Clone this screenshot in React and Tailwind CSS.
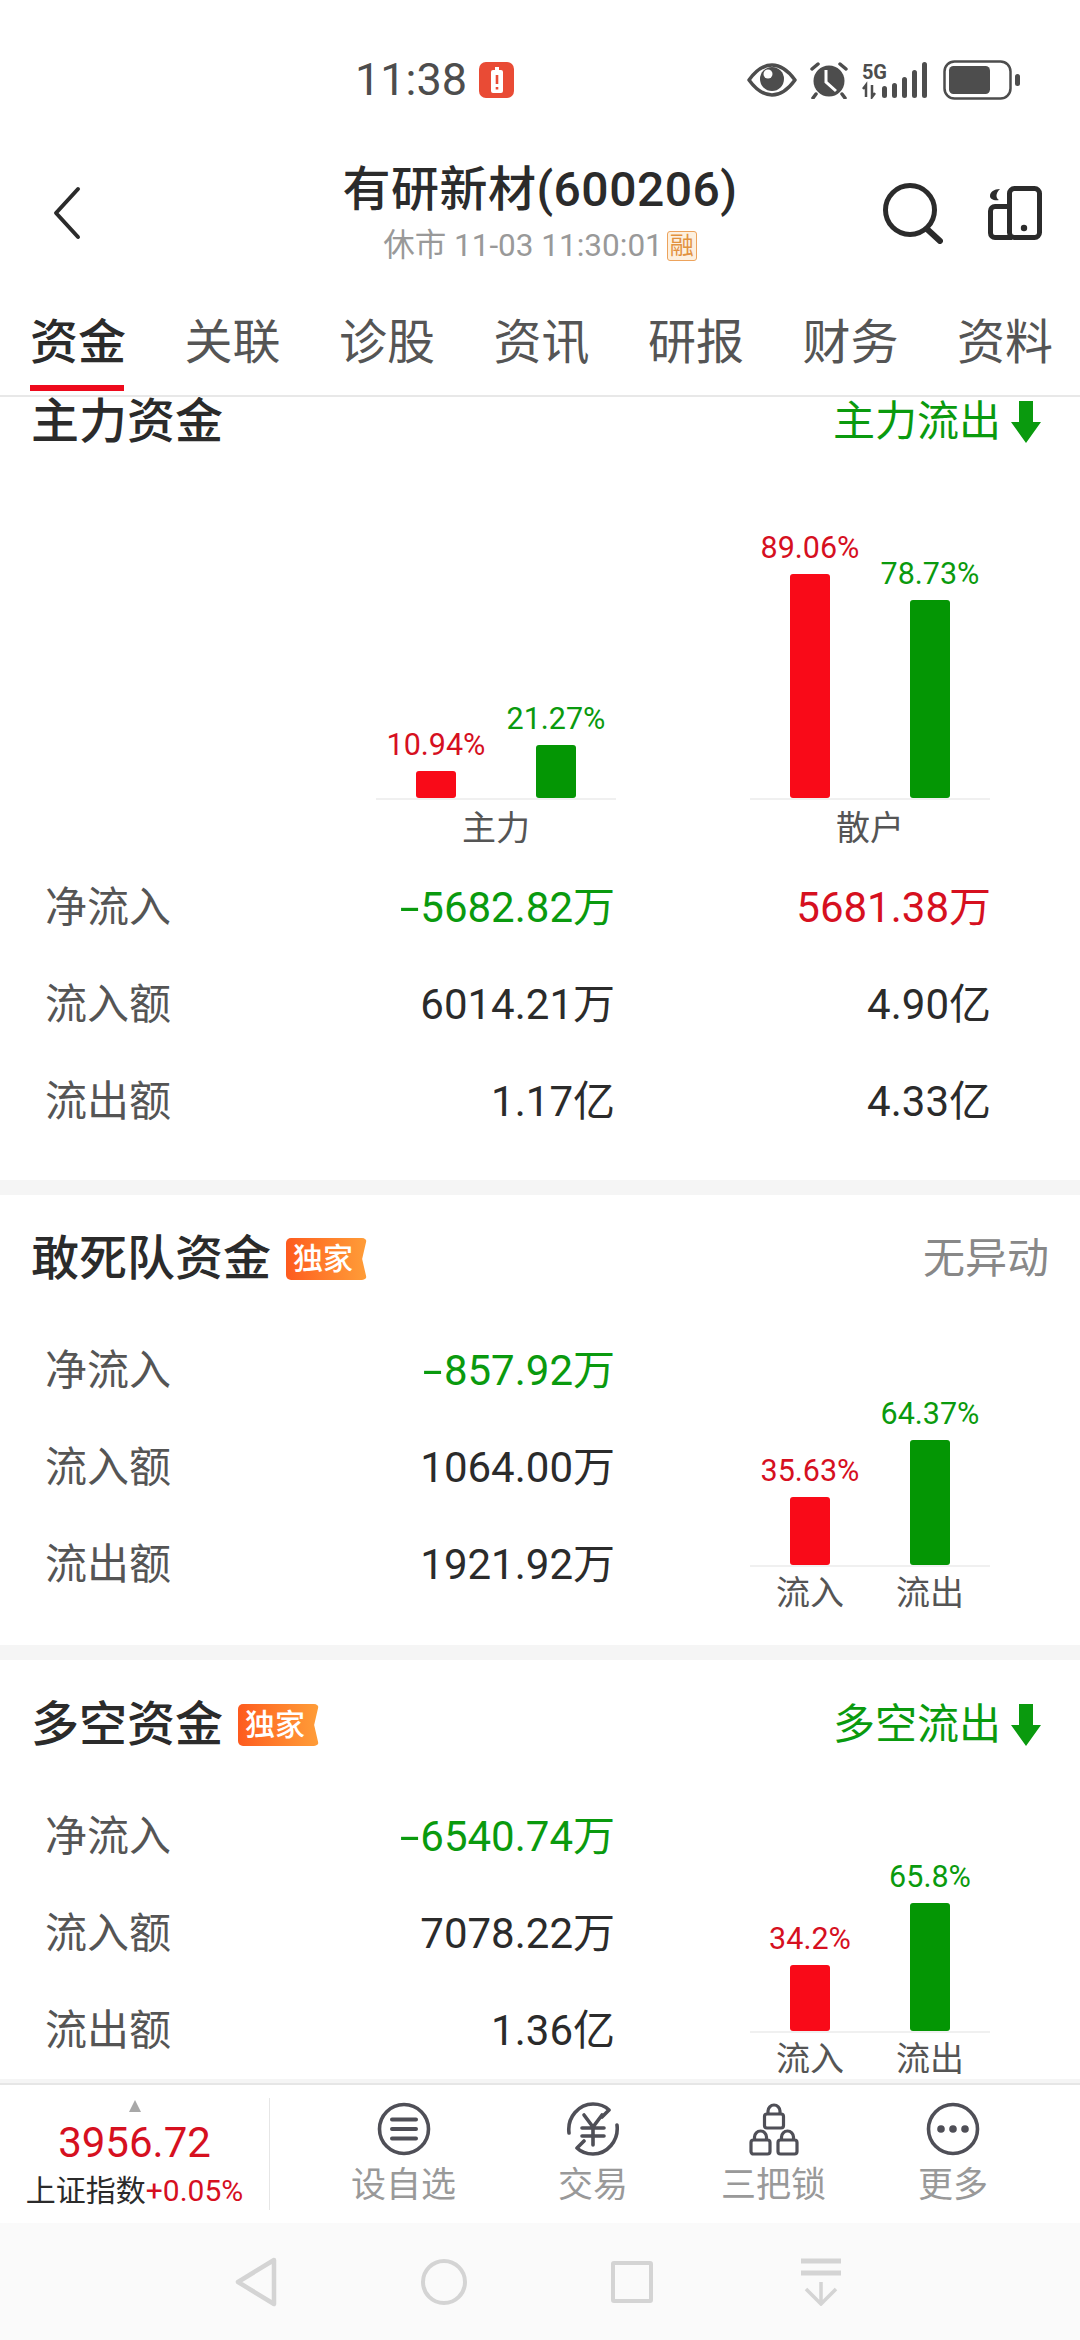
const RED = 'text-[#d6101f]'
const GREEN = 'text-[#0a9a0e]'

function Eye() {
  return (
    <svg width="50" height="34" viewBox="0 0 50 34" className="ml-[747px] shrink-0">
      <path d="M2 17 C10 6 17 2 25 2 C33 2 40 6 48 17 C40 28 33 32 25 32 C17 32 10 28 2 17 Z" fill="none" stroke="#4d4d4d" strokeWidth="3.5" strokeLinejoin="round" />
      <circle cx="25" cy="16" r="12" fill="#4d4d4d" />
      <circle cx="21" cy="11" r="4.5" fill="#fff" />
    </svg>
  )
}

function Alarm() {
  return (
    <svg width="38" height="38" viewBox="0 0 38 38" className="ml-[13px] shrink-0">
      <circle cx="19" cy="20" r="15.5" fill="#4d4d4d" />
      <path d="M2 8 L8 3 M36 8 L30 3 M6 33 L3 37 M32 33 L35 37" stroke="#4d4d4d" strokeWidth="3.5" strokeLinecap="round" />
      <path d="M16 9 L16 21 L26 30" fill="none" stroke="#fff" strokeWidth="3" />
    </svg>
  )
}

function Signal() {
  return (
    <svg width="68" height="38" viewBox="0 0 68 38" className="ml-[14px] shrink-0">
      <text x="0" y="18" fontFamily="Roboto" fontWeight="700" fontSize="20" fill="#4d4d4d" textLength="25">5G</text>
      <path d="M4 36 V24 L1 28 M10 24 V36 L13 32" fill="none" stroke="#4d4d4d" strokeWidth="2.5" />
      <rect x="20" y="25" width="5" height="12" rx="2.5" fill="#4d4d4d" />
      <rect x="30" y="22" width="5" height="15" rx="2.5" fill="#4d4d4d" />
      <rect x="40" y="16" width="5" height="21" rx="2.5" fill="#4d4d4d" />
      <rect x="50" y="9" width="5" height="28" rx="2.5" fill="#4d4d4d" />
      <rect x="60" y="1" width="5" height="36" rx="2.5" fill="#4d4d4d" />
    </svg>
  )
}

function Battery() {
  return (
    <svg width="78" height="40" viewBox="0 0 78 40" className="ml-[13px] shrink-0">
      <rect x="1.5" y="1.5" width="66" height="37" rx="10" fill="none" stroke="#4d4d4d" strokeWidth="2.5" />
      <rect x="6" y="6" width="41" height="28" rx="4.5" fill="#4d4d4d" />
      <rect x="72" y="14" width="5" height="12" rx="2.5" fill="#4d4d4d" />
    </svg>
  )
}

function StatusBar() {
  return (
    <div className="flex h-[160px] items-center">
      <div className="absolute flex items-center pl-[355px]">
        <span className="text-[45px] leading-[60px] text-[#4d4d4d]">11:38</span>
        <div className="ml-[12px] flex h-[36px] w-[35px] items-center justify-center rounded-[7px] bg-[#e94b35]">
          <svg width="12" height="26" viewBox="0 0 12 26" className="block">
            <path d="M4 0 H8 V3 H10 A2 2 0 0 1 12 5 V24 A2 2 0 0 1 10 26 H2 A2 2 0 0 1 0 24 V5 A2 2 0 0 1 2 3 H4 Z" fill="#fff" />
            <path d="M6 8 V17 M6 20 V22.5" stroke="#e94b35" strokeWidth="2.6" />
          </svg>
        </div>
      </div>
      <Eye />
      <Alarm />
      <Signal />
      <Battery />
    </div>
  )
}

function NavBar() {
  return (
    <div className="flex h-[106px] items-center">
      <div className="w-[200px] pl-[50px]">
        <svg width="32" height="54" viewBox="0 0 32 54" className="block">
          <path d="M28 3 L6 27 L28 51" fill="none" stroke="#2b2b2b" strokeWidth="4" strokeLinecap="round" strokeLinejoin="round" />
        </svg>
      </div>
      <div className="flex w-[680px] flex-col items-center">
        <div className="text-[48px] leading-[60px] font-medium tracking-[0.5px] text-[#2b2b2b]">有研新材(600206)</div>
        <div className="mt-[6px] flex h-[40px] items-center">
          <span className="text-[31.5px] leading-[40px] text-[#999999]">休市 11-03 11:30:01</span>
          <span className="ml-[4px] flex h-[30px] w-[30px] items-center justify-center rounded-[3px] border border-[#eda35c] bg-[#fdf0df] text-[24px] leading-none text-[#e2923f]">融</span>
        </div>
      </div>
      <div className="flex w-[200px] items-center pl-[3px]">
        <svg width="60" height="61" viewBox="0 0 60 61" className="block shrink-0">
          <circle cx="27" cy="27" r="24.5" fill="none" stroke="#2b2b2b" strokeWidth="5" />
          <path d="M44 46 L57 58" stroke="#2b2b2b" strokeWidth="6" strokeLinecap="round" />
        </svg>
        <svg width="54" height="54" viewBox="0 0 54 54" className="ml-[45px] block shrink-0">
          <rect x="21.5" y="2.5" width="30" height="49" rx="5" fill="none" stroke="#2b2b2b" strokeWidth="5" />
          <path d="M21 20.5 H7 A4.5 4.5 0 0 0 2.5 25 V47 A4.5 4.5 0 0 0 7 51.5 H24" fill="none" stroke="#2b2b2b" strokeWidth="5" />
          <circle cx="36" cy="42" r="3.2" fill="#2b2b2b" />
          <path d="M12 3 C6 3 2 6 2 10 C2 13 6 15 11 14 C8 12 7 8 12 3 Z" fill="#2b2b2b" />
        </svg>
      </div>
    </div>
  )
}

function Tabs() {
  const tabs = ['资金', '关联', '诊股', '资讯', '研报', '财务', '资料']
  return (
    <div className="flex h-[131px] gap-[60.5px] border-b-2 border-[#e8e8e8] pt-[46px] pl-[30px]">
      {tabs.map((tab, index) => (
        <div key={tab + index} className="w-[94px] shrink-0 overflow-visible">
          <div className={`h-[79px] border-b-[6px] text-center text-[48px] leading-[62px] whitespace-nowrap ${index === 0 ? 'border-[#ee0a1c] font-medium text-[#2b2b2b]' : 'border-transparent text-[#555555]'}`}>
            {tab}
          </div>
        </div>
      ))}
    </div>
  )
}

function Badge() {
  return (
    <div className="ml-[15px] flex h-[42px] w-[81px] items-center rounded-[5px] bg-linear-to-r from-[#fd5a1e] to-[#ff9d38] pl-[7px] text-[30px] leading-none font-medium text-white [clip-path:polygon(0_0,100%_0,94%_50%,100%_100%,0_100%)]">
      独家
    </div>
  )
}

function DownArrow() {
  return (
    <svg width="30" height="42" viewBox="0 0 30 42" className="ml-[10px] block shrink-0">
      <path d="M8 0 H22 V21 H30 L15 42 L0 21 H8 Z" fill="#0a9a0e" />
    </svg>
  )
}

function SectionHead({ title, badge, status, down }) {
  return (
    <div className={`flex h-[60px] items-center justify-between pl-[31px] ${down ? 'pr-[39px]' : 'pr-[31px]'}`}>
      <div className="flex items-center">
        <span className="text-[48px] leading-[60px] font-medium text-[#2b2b2b]">{title}</span>
        {badge && <Badge />}
      </div>
      <div className="flex items-center">
        <span className={`text-[42px] leading-[60px] ${down ? GREEN : 'text-[#888888]'}`}>{status}</span>
        {down && <DownArrow />}
      </div>
    </div>
  )
}

function Bar({ pct, height, color, textColor }) {
  return (
    <div className="flex w-[120px] flex-col items-center">
      <div className={`mb-[8px] text-[30.5px] leading-[36px] ${textColor}`}>{pct}</div>
      <div className={`w-[40px] rounded-t-[3px] rounded-b-[3px] ${color}`} style={{ height }} />
    </div>
  )
}

function Chart({ bars, labels }) {
  return (
    <div className="w-[240px] shrink-0">
      <div className="flex items-end border-b-2 border-[#f0f0f0]">
        <Bar pct={bars[0][0]} height={bars[0][1]} color="bg-[#f90a18]" textColor={RED} />
        <Bar pct={bars[1][0]} height={bars[1][1]} color="bg-[#049604]" textColor={GREEN} />
      </div>
      {labels.length === 1 ? (
        <div className="mt-[8px] text-center text-[34px] leading-[40px] text-[#555555]">{labels[0]}</div>
      ) : (
        <div className="mt-[6px] flex">
          {labels.map((label) => (
            <div key={label} className="w-[120px] text-center text-[34px] leading-[40px] text-[#555555]">{label}</div>
          ))}
        </div>
      )}
    </div>
  )
}

function Value({ text }) {
  // the minus in the reference runs wider than the font's hyphen
  if (text.startsWith('-')) {
    return (
      <>
        <span className="mr-[1px] inline-block origin-right scale-x-[1.7]">-</span>
        {text.slice(1)}
      </>
    )
  }
  return text
}

function Row({ label, values }) {
  return (
    <div className="flex h-[97px] items-center">
      <div className="w-[290px] pl-[45px] text-[42px] leading-[60px] text-[#555555]">{label}</div>
      <div className={`w-[325px] text-right text-[42px] leading-[60px] ${values[0][1]}`}><Value text={values[0][0]} /></div>
      {values[1] && (
        <div className={`w-[376px] text-right text-[42px] leading-[60px] ${values[1][1]}`}>{values[1][0]}</div>
      )}
    </div>
  )
}

function SideSection({ title, status, down, rows, bars, className }) {
  return (
    <section className={`bg-white ${className}`}>
      <SectionHead title={title} badge status={status} down={down} />
      <div className="flex items-end">
        <div className="mt-[33px] w-[750px] shrink-0">
          {rows.map((row) => (
            <Row key={row[0]} label={row[0]} values={[[row[1], row[2]]]} />
          ))}
        </div>
        <Chart bars={bars} labels={['流入', '流出']} />
      </div>
    </section>
  )
}

const DARK = 'text-[#2b2b2b]'

function BottomIcon({ name }) {
  const stroke = '#4f4f57'
  if (name === 'list') {
    return (
      <svg width="54" height="54" viewBox="0 0 54 54" className="block">
        <circle cx="27" cy="27" r="24.5" fill="none" stroke={stroke} strokeWidth="3.6" />
        <path d="M15 17.5 H39 M15 27 H39 M15 36.5 H39" stroke={stroke} strokeWidth="4" strokeLinecap="round" />
      </svg>
    )
  }
  if (name === 'trade') {
    return (
      <svg width="54" height="54" viewBox="0 0 54 54" className="block">
        <path d="M3 31 C1 15 13 2 27 2 C34 2 39 4 43 8 L36 15" fill="none" stroke={stroke} strokeWidth="3.6" strokeLinecap="round" strokeLinejoin="round" />
        <path d="M51 23 C53 39 41 52 27 52 C20 52 15 50 11 46 L18 39" fill="none" stroke={stroke} strokeWidth="3.6" strokeLinecap="round" strokeLinejoin="round" />
        <path d="M18 13 L27 25 L36 13 M16 26 H38 M16 34 H38 M27 25 V43" fill="none" stroke={stroke} strokeWidth="3.6" strokeLinecap="round" />
      </svg>
    )
  }
  if (name === 'locks') {
    const lock = (x, y) => (
      <g key={x + '-' + y}>
        <rect x={x} y={y + 10} width="19" height="14" rx="2.5" fill="none" stroke={stroke} strokeWidth="3.2" />
        <path d={`M${x + 3.5} ${y + 10} V${y + 7} A6 6 0 0 1 ${x + 15.5} ${y + 7} V${y + 10}`} fill="none" stroke={stroke} strokeWidth="3.2" />
      </g>
    )
    return (
      <svg width="50" height="54" viewBox="0 0 50 54" className="block">
        {lock(15.5, 2)}
        {lock(2, 28)}
        {lock(29, 28)}
      </svg>
    )
  }
  return (
    <svg width="54" height="54" viewBox="0 0 54 54" className="block">
      <circle cx="27" cy="27" r="24.5" fill="none" stroke={stroke} strokeWidth="3.6" />
      <circle cx="15" cy="27" r="3.8" fill={stroke} />
      <circle cx="27" cy="27" r="3.8" fill={stroke} />
      <circle cx="39" cy="27" r="3.8" fill={stroke} />
    </svg>
  )
}

function BottomBar() {
  const items = [
    { icon: 'list', label: '设自选', ml: 'ml-[81px]' },
    { icon: 'trade', label: '交易', ml: 'ml-[102px]' },
    { icon: 'locks', label: '三把锁', ml: 'ml-[93px]' },
    { icon: 'more', label: '更多', ml: 'ml-[92px]' },
  ]
  return (
    <div className="flex h-[140px] shrink-0 items-start border-t-2 border-[#e6e6e6] bg-white">
      <div className="mt-[13px] flex h-[112px] w-[270px] flex-col items-center border-r border-[#e6e6e6]">
        <svg width="14" height="14" viewBox="0 0 14 14" className="block">
          <path d="M7 2 L13 14 H1 Z" fill="#a8a8a8" />
        </svg>
        <div className={`mt-[4px] text-[42px] leading-[54px] ${RED}`}>3956.72</div>
        <div className="mt-[2px] text-[30px] leading-[38px] whitespace-nowrap text-[#2b2b2b]">
          上证指数<span className={RED}>+0.05%</span>
        </div>
      </div>
      {items.map((item) => (
        <div key={item.label} className={`mt-[17px] flex flex-col items-center ${item.ml}`}>
          <BottomIcon name={item.icon} />
          <div className="mt-[8px] text-[35px] leading-[44px] whitespace-nowrap text-[#999999]">{item.label}</div>
        </div>
      ))}
    </div>
  )
}

function SystemNav() {
  return (
    <div className="flex h-[117px] shrink-0 items-center bg-[#fafafa]">
      <svg width="42" height="50" viewBox="0 0 42 50" className="ml-[235px] block">
        <path d="M39 3 L3 25 L39 47 Z" fill="none" stroke="#d4d4d4" strokeWidth="4.5" strokeLinejoin="round" />
      </svg>
      <div className="ml-[144px] h-[46px] w-[46px] rounded-full border-[4.5px] border-[#d4d4d4]" />
      <div className="ml-[144px] h-[42px] w-[42px] rounded-[3px] border-[4.5px] border-[#d4d4d4]" />
      <svg width="42" height="48" viewBox="0 0 42 48" className="ml-[147px] block">
        <path d="M1 3 H41 M1 15 H41" stroke="#d4d4d4" strokeWidth="5" />
        <path d="M21 24 V45 M6 31 L21 46 L36 31" fill="none" stroke="#d4d4d4" strokeWidth="3.5" />
      </svg>
    </div>
  )
}

export default function App() {
  return (
    <div className="relative flex h-[2340px] w-[1080px] flex-col overflow-hidden bg-white font-['Roboto','Noto_Sans_CJK_SC',sans-serif]">
      <header className="h-[397px] shrink-0">
        <StatusBar />
        <NavBar />
        <Tabs />
      </header>

      <main className="min-h-0 flex-1 overflow-hidden bg-[#f5f5f5]">
        <section className="-mt-[5px] bg-white pb-[30px]">
          <SectionHead title="主力资金" status="主力流出" down />
          <div className="flex h-[396px] items-end pl-[376px]">
            <Chart bars={[['10.94%', 27], ['21.27%', 53]]} labels={['主力']} />
            <div className="w-[134px] shrink-0" />
            <Chart bars={[['89.06%', 224], ['78.73%', 198]]} labels={['散户']} />
          </div>
          <div className="mt-[11px]">
            <Row label="净流入" values={[['-5682.82万', GREEN], ['5681.38万', RED]]} />
            <Row label="流入额" values={[['6014.21万', DARK], ['4.90亿', DARK]]} />
            <Row label="流出额" values={[['1.17亿', DARK], ['4.33亿', DARK]]} />
          </div>
        </section>

        <SideSection
          className="mt-[15px] pt-[34px] pb-[32px]"
          title="敢死队资金"
          status="无异动"
          rows={[
            ['净流入', '-857.92万', GREEN],
            ['流入额', '1064.00万', DARK],
            ['流出额', '1921.92万', DARK],
          ]}
          bars={[['35.63%', 68], ['64.37%', 125]]}
        />

        <SideSection
          className="mt-[15px] pt-[35px]"
          title="多空资金"
          status="多空流出"
          down
          rows={[
            ['净流入', '-6540.74万', GREEN],
            ['流入额', '7078.22万', DARK],
            ['流出额', '1.36亿', DARK],
          ]}
          bars={[['34.2%', 66], ['65.8%', 128]]}
        />
      </main>

      <BottomBar />
      <SystemNav />
    </div>
  )
}
